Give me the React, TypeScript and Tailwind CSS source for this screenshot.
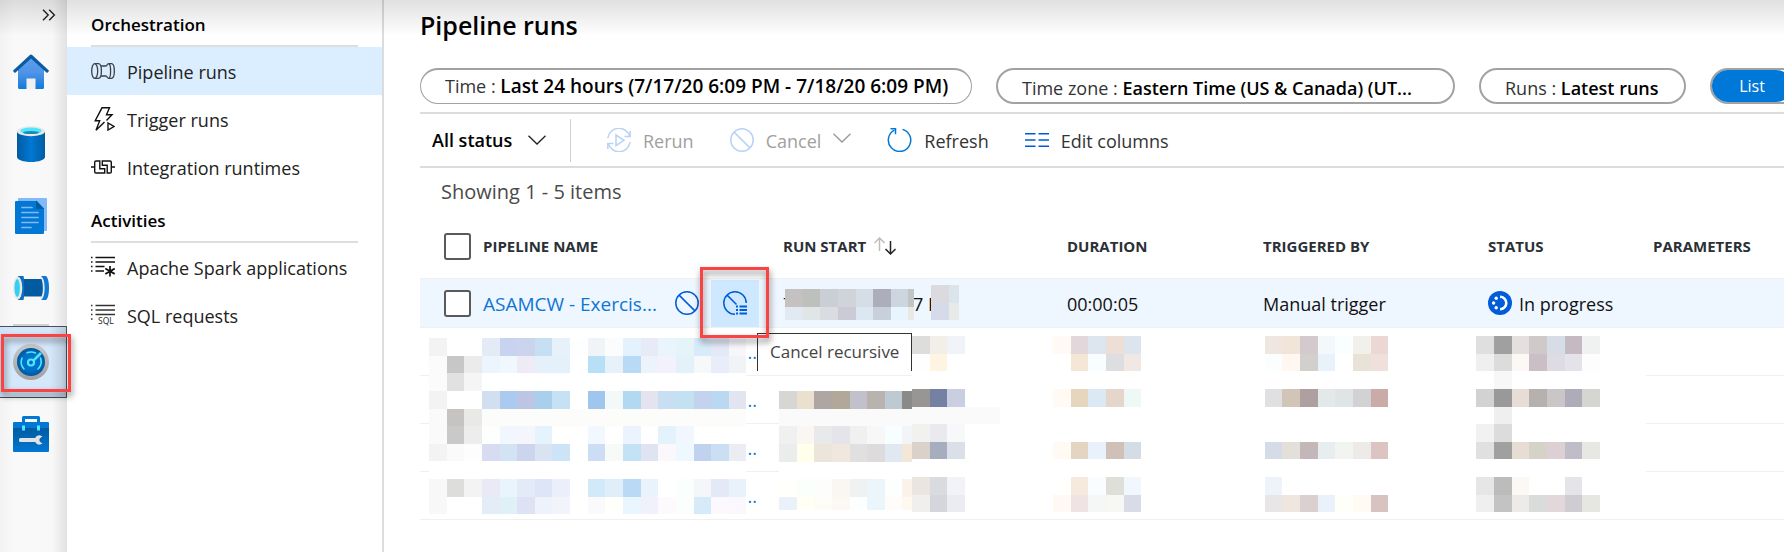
import React from 'react';

type IconProps = { className?: string };

const CELL = 17.64;

/* ---------- Rail icons ---------- */

function ExpandIcon() {
  return (
    <svg width="14" height="12" viewBox="0 0 14 12" fill="none" stroke="#222" strokeWidth="1.4" aria-hidden="true">
      <path d="M1 .7 6.2 6 1 11.3M7.2 .7 12.4 6 7.2 11.3" />
    </svg>
  );
}

function HomeIcon() {
  return (
    <svg width="36" height="36" viewBox="0 0 36 36" aria-hidden="true">
      <defs>
        <linearGradient id="home-body" x1="0" y1="0" x2="0" y2="1">
          <stop offset="0" stopColor="#5ea0ef" />
          <stop offset="0.5" stopColor="#5093e8" />
          <stop offset="1" stopColor="#0f7bda" />
        </linearGradient>
      </defs>
      <path d="M18 2 5 15v18.500a1.500 1.500 0 0 0 1.500 1.500h23a1.500 1.500 0 0 0 1.500-1.500V15z" fill="url(#home-body)" />
      <path d="M13.500 24.500h9V35h-9z" fill="#f0f0f0" />
      <path d="M16.900.9a1.600 1.600 0 0 1 2.200 0L35.600 16.300a1 1 0 0 1 0 1.300l-.9.900a1 1 0 0 1-1.300 0L18 4.500 2.600 18.500a1 1 0 0 1-1.300 0l-.9-.9a1 1 0 0 1 0-1.300z" fill="#0a5ba0" />
    </svg>
  );
}

function DatabaseIcon() {
  return (
    <svg width="36" height="36" viewBox="0 0 36 36" aria-hidden="true">
      <defs>
        <linearGradient id="db-body" x1="0" y1="0" x2="1" y2="0">
          <stop offset="0" stopColor="#005ba1" />
          <stop offset="0.2" stopColor="#0067b5" />
          <stop offset="0.5" stopColor="#0078d4" />
          <stop offset="0.8" stopColor="#0067b5" />
          <stop offset="1" stopColor="#005ba1" />
        </linearGradient>
      </defs>
      <path d="M4 5v26c0 2.800 6.300 5 14 5s14-2.200 14-5V5z" fill="url(#db-body)" />
      <ellipse cx="18" cy="5.200" rx="14" ry="5" fill="#e8e8e8" />
      <ellipse cx="18" cy="4.800" rx="10.800" ry="3.300" fill="#50e6ff" />
      <ellipse cx="18" cy="6.600" rx="8" ry="1.500" fill="#198ab3" />
    </svg>
  );
}

function DocsIcon() {
  return (
    <svg width="36" height="36" viewBox="0 0 36 36" aria-hidden="true">
      <rect x="5" width="29" height="33" rx="1" fill="#83b9f9" />
      <path d="M3 3h21l7 7.500V35a1 1 0 0 1-1 1H3a1 1 0 0 1-1-1V4a1 1 0 0 1 1-1z" fill="#0078d4" />
      <path d="M23 2.500 31 11h-6.500A1.500 1.500 0 0 1 23 9.500z" fill="#005ba1" />
      <path d="M9 9.500h10M9 14.500h16M9 19.500h16M9 24.500h16M9 29.500h9" stroke="#83b9f9" strokeWidth="1.700" strokeLinecap="round" />
    </svg>
  );
}

function PipeIcon() {
  return (
    <svg width="36" height="36" viewBox="0 0 36 36" aria-hidden="true">
      <path d="M8 9h22v17.500H8z" fill="#005ba1" />
      <path d="M5 6h5.500l.5 3v18l-.5 3H5z" fill="#0f6cbf" />
      <ellipse cx="4.700" cy="18" rx="4.600" ry="11.500" fill="#e6e6e6" />
      <ellipse cx="4.200" cy="18" rx="2.700" ry="9" fill="#32d0ee" />
      <path d="M28 6h5c4 2.500 4 21.500 0 24h-5c4-4 4-20 0-24z" fill="#0f78d4" />
      <path d="M28 7c3.700 4 3.700 18 0 22" fill="none" stroke="#e6e6e6" strokeWidth="1.800" />
    </svg>
  );
}

function MonitorIcon() {
  return (
    <svg width="36" height="36" viewBox="0 0 36 36" aria-hidden="true">
      <defs>
        <linearGradient id="mon-ring" x1="0" y1="0" x2="0" y2="1">
          <stop offset="0" stopColor="#c9c9c9" />
          <stop offset="1" stopColor="#a0a0a0" />
        </linearGradient>
        <radialGradient id="mon-face">
          <stop offset="0" stopColor="#0078d4" />
          <stop offset="0.6" stopColor="#0070c6" />
          <stop offset="1" stopColor="#0058a0" />
        </radialGradient>
      </defs>
      <circle cx="18" cy="18" r="18" fill="url(#mon-ring)" />
      <circle cx="18" cy="18" r="14" fill="url(#mon-face)" />
      <g fill="none" stroke="#50e6ff" strokeWidth="1.600" strokeLinecap="round">
        <path d="M11 25a10.500 10.500 0 0 1-2-11" />
        <path d="M14 8.800a10.500 10.500 0 0 1 8.500.2" />
        <path d="M27.500 14a10.500 10.500 0 0 1-2.500 11" />
      </g>
      <path d="M19.800 16 27 8.500l1.500 1.500L21 17.200z" fill="#50e6ff" stroke="#50e6ff" />
      <circle cx="18" cy="18.500" r="3" fill="#0067b8" stroke="#50e6ff" strokeWidth="2.200" />
    </svg>
  );
}

function ToolboxIcon() {
  return (
    <svg width="36" height="36" viewBox="0 0 36 36" aria-hidden="true">
      <defs>
        <linearGradient id="box-body" x1="0" y1="0" x2="0" y2="1">
          <stop offset="0" stopColor="#005ba1" />
          <stop offset="1" stopColor="#0078d4" />
        </linearGradient>
      </defs>
      <path d="M10.500 7V1.500h15V7" fill="none" stroke="#0078d4" strokeWidth="3" strokeLinejoin="round" />
      <path d="M0 12h36v23a1 1 0 0 1-1 1H1a1 1 0 0 1-1-1z" fill="url(#box-body)" />
      <path d="M1 6h34a1 1 0 0 1 1 1v5H0V7a1 1 0 0 1 1-1z" fill="#0078d4" />
      <path d="M9 9.500h3v5H9zM24 9.500h3v5h-3z" fill="#50e6ff" />
      <path d="M7.500 22h14.800c.8-1.800 2.600-2.800 4.700-2.600l2.500.8-3 2.500v2.600l3 2.500-2.500.8c-2.100.2-3.900-.8-4.700-2.600H7.500a1.500 1.500 0 0 1-1.500-1.500v-1A1.500 1.500 0 0 1 7.500 22z" fill="#e3e3e3" />
    </svg>
  );
}

/* ---------- Navigation icons ---------- */

function PipelineRunsIcon() {
  return (
    <svg width="24" height="24" viewBox="0 0 24 24" fill="none" stroke="#3b4248" strokeWidth="1.300" aria-hidden="true">
      <ellipse cx="3.700" cy="12" rx="3" ry="7.300" />
      <path d="M3.700 4.700h4c3.600.6 3.600 14 0 14.600h-4" />
      <path d="M10 7h5.500M10 17h5.500" />
      <path d="M15.500 7c.6-1.700 1.300-2.300 2.200-2.300h3c3.500.6 3.500 14 0 14.600h-3c-.9 0-1.600-.6-2.200-2.300" />
      <path d="M17.800 4.700c2.400 1 2.400 13.600 0 14.600" />
    </svg>
  );
}

function TriggerIcon() {
  return (
    <svg width="24" height="24" viewBox="0 0 24 24" fill="none" stroke="#111" strokeWidth="1.400" aria-hidden="true">
      <path d="M15.500 13.500 21 7.800h-5.500L18.500.8H11L4.200 13.700h4.500L5 23.300l8.500-8.200" />
      <path d="M17 16v7l6-3.500z" />
    </svg>
  );
}

function IntegrationIcon() {
  return (
    <svg width="24" height="24" viewBox="0 0 24 24" fill="none" stroke="#111" strokeWidth="1.400" aria-hidden="true">
      <path d="M0 12h3.500M20.500 12H24" />
      <path d="M8.800 6H5A1.300 1.300 0 0 0 3.700 7.300v9.400A1.300 1.300 0 0 0 5 18h8.700v-4.200H8.800z" />
      <path d="M11.300 10.200V6H19A1.300 1.300 0 0 1 20.300 7.300v9.400A1.300 1.300 0 0 1 19 18h-2.800v-7.800z" />
    </svg>
  );
}

function SparkIcon() {
  return (
    <svg width="24" height="24" viewBox="0 0 24 24" fill="none" stroke="#111" strokeWidth="1.300" aria-hidden="true">
      <path d="M4.500 2.500H24M4.500 7H24M4.500 11.500h9M4.500 16h8.500" />
      <path d="M0 2.500h1.500M0 7h1.500M0 11.500h1.500M0 16h1.500" />
      <path d="M19 11v10.500M14.300 13.600l9.400 5.300M23.700 13.600l-9.400 5.300" strokeWidth="1.700" />
    </svg>
  );
}

function SqlIcon() {
  return (
    <svg width="24" height="24" viewBox="0 0 24 24" fill="none" stroke="#333" strokeWidth="1.300" aria-hidden="true">
      <path d="M4.500 2.500H24M4.500 7H24M4.500 11.500H24" />
      <path d="M0 2.500h1.500M0 7h1.500M0 11.500h1.500M0 16h1.500" />
      <text x="7" y="21" fontSize="8.500" fill="#222" stroke="none" fontFamily="'Open Sans', sans-serif">SQL</text>
    </svg>
  );
}

/* ---------- Toolbar and table icons ---------- */

function ChevronIcon({ className }: IconProps) {
  return (
    <svg className={className} width="18" height="10" viewBox="0 0 18 10" fill="none" stroke="currentColor" strokeWidth="1.300" aria-hidden="true">
      <path d="M.5.7 9 9 17.500.7" />
    </svg>
  );
}

function RerunIcon() {
  return (
    <svg width="24" height="24" viewBox="0 0 24 24" fill="none" stroke="#b9d2f5" strokeWidth="1.500" aria-hidden="true">
      <path d="M.9 10A11.200 11.200 0 0 1 22.800 8.500M23.100 14A11.200 11.200 0 0 1 1.200 15.500" />
      <path d="M23.200 3v5.600h-5.700M.8 21v-5.600h5.700" />
      <path d="M9 7v10.500l8-5.200z" />
    </svg>
  );
}

function CancelIcon({ className }: IconProps) {
  return (
    <svg className={className} width="24" height="24" viewBox="0 0 24 24" fill="none" stroke="currentColor" strokeWidth="1.500" aria-hidden="true">
      <circle cx="12" cy="12" r="11.200" />
      <path d="m4.100 4.100 15.800 15.800" />
    </svg>
  );
}

function CancelRecursiveIcon() {
  return (
    <svg width="24" height="24" viewBox="0 0 24 24" fill="none" stroke="#015cda" strokeWidth="1.500" aria-hidden="true">
      <path d="M23.200 12A11.200 11.200 0 1 0 12 23.200M4.100 4.100l9.400 9.400" />
      <path d="M16.500 15.500H24M16.500 19H24M16.500 22.500H24" strokeWidth="1.800" />
      <path d="M13 15.500h2M13 19h2M13 22.500h2" strokeWidth="1.800" />
    </svg>
  );
}

function RefreshIcon() {
  return (
    <svg width="25" height="24" viewBox="0 0 25 24" fill="none" stroke="#0078d4" strokeWidth="1.500" aria-hidden="true">
      <path d="M15.500 1.400A11.200 11.200 0 1 1 7.500 2.200" />
      <path d="M3.500.8h5v5.400" />
    </svg>
  );
}

function ColumnsIcon() {
  return (
    <svg width="24" height="24" viewBox="0 0 24 24" stroke="#015cda" strokeWidth="1.600" aria-hidden="true">
      <path d="M0 5.700h10.500M13.500 5.700H24M0 12h10.500M13.500 12H24M0 18.300h10.500M13.500 18.300H24" />
    </svg>
  );
}

function SortIcon() {
  return (
    <svg width="22" height="18" viewBox="0 0 22 18" fill="none" strokeWidth="1.500" aria-hidden="true">
      <path d="M5.500 14V1M.5 6l5-5 5 5" stroke="#bdbdbd" />
      <path d="M16.500 4v13M11.500 12l5 5 5-5" stroke="#222" />
    </svg>
  );
}

function InProgressIcon() {
  return (
    <svg width="24" height="24" viewBox="0 0 24 24" aria-hidden="true">
      <circle cx="12" cy="12" r="12" fill="#015cda" />
      <path d="M12 5.700a6.300 6.300 0 0 1 0 12.600" fill="none" stroke="#fff" strokeWidth="2.600" />
      <g fill="#fff">
        <circle cx="8.200" cy="7.300" r="1.700" />
        <circle cx="5.600" cy="12" r="1.700" />
        <circle cx="8.200" cy="16.700" r="1.700" />
      </g>
    </svg>
  );
}

/* ---------- Redaction mosaic ---------- */

type MosaicProps = { rows: string[]; width: number; height: number; className: string };

function Mosaic({ rows, width, height, className }: MosaicProps) {
  const at = (n: number) => Math.round(n * CELL);
  return (
    <svg className={className} width={width} height={height} viewBox={`0 0 ${width} ${height}`} shapeRendering="crispEdges" aria-hidden="true">
      {rows.map((row, r) =>
        row.split(' ').map((color, c) =>
          color === '-' || color === '' ? null : (
            <rect key={`${r}-${c}`} x={at(c)} y={at(r)} width={at(c + 1) - at(c)} height={at(r + 1) - at(r)} fill={`#${color}`} />
          ),
        ),
      )}
    </svg>
  );
}

const NAME_MOSAIC = [
  'f3f3f3 fff fff e4ebf6 c8d3ef cbd4ed c6dff3 e7f1f9 fcfffd f0f4f8 fafdfb e3f2fc e7ebf7 eaf4fc e4f4f9 d8ebfa e3e9f7 f7f6fa',
  'fbfbfb c7c7c7 ebebeb ecf4fd f0f7ff eeebf7 e4f1fb e4f1fb fff b7dff6 e6f1fa b9daf4 ecf3fb f3f1fc e3f1fa f7f8f9 e7eef9 f0f4f7',
  'fbfbfb e1e1e1 f5f5f5',
  'f3f3f3 fff fff d2dff0 abcaf0 bdc5e5 aacfec c6e1f4 fff 9fc6ec f3f8f8 b3d8f2 e5e3f0 c8def3 c4e1f2 c4d3ed b9d8f1 e2e5ef',
  'fafafa c5c4c3 e9e9e7 fcfcfa fcfcfa fcfcfa fcfcfa fcfcfa fcfcfa fcfcfa fcfcfa fcfcfa fcfcfa fcfcfa fcfcfa fcfcfa fcfcfa fcfcfa',
  'fafafa c9c9c9 ededed fdfffe f2f7ff f5f6fb e5f3fd fffffd fff f2f8ff fff ebf4fe fff e4f2fc f2f7ff fff fff fff',
  'f3f3f3 fafafa fdfdfd d7dcf0 d2e3f4 cdd5ee d9e3f2 cce3f8 fff ccdef5 f7faf6 c4e2f5 e0e3f2 fcf7fb eef9ff c1d2ee cbdff4 ececf3',
  '',
  'f8f8f8 dddddb f3f3f3 eae9f6 e9f5fc e4ebf8 dfe5f8 eaeffb fff d1e9f9 dfeef8 bad9f4 eaf2fb fff fafffe f4f6fa e3e9f6 e9f1fa',
  'f8f8f8 fff fff e4ecf7 dff0f7 dde3f5 eef2fb f1f4fa fff fafafd fffffc e9f6fd f1f1fb fdfafd fafffe d6eafa fbf9fd faf8fc',
];

const START_MOSAIC = [
  'd6d6d3 e9e1cd aea6a3 b2a89a c1c0cb b8b3af bdcad1 8a8a87',
  'fafafa fafafa fafafa fafafa fafafa fafafa fafafa fafafa',
  'f0f0f0 faf7f2 e8e9eb e3e5ea f0f0f1 f7f7f7 f8fdff f2f4f7',
  'eaedec ffffec ece5dc f0e7de e0e0e1 dddbdc e0e9f2 f3e7d7',
  '',
  'fffffc fbfffb fdfdfc faf6f2 f0f1f1 ecf5fa fdffff fbf2ea',
  'eaf1f9 fffff4 fdfcf7 fcf8f4 fbffff eaf5fc fffdfa fff8ee',
];

const GAP_5 = '- - - - -';
const GAP_7 = '- - - - - - -';

const DETAIL_MOSAIC = [
  ['dddddb f2efe8 f0f4f8', 'fffaf3 e2d8dc dde5ef eddfd6 dce4ee', 'efe6df f0e5d8 d4cacd f3f8fb f9feff f1f0ea ebd8d5', 'dfdfdf a0a0a0 e5e0e0 cfcac9 d6dde7 c5b9c2 eff2f1'],
  ['fefefe fff3e2 fff', 'fffffd f4e7d6 f8feff dddee1 f1e8e3', 'fafeff fff7f0 d1d0cd e9f1fa fff e9e2d7 efdfdd', 'efefef dcdcdc fcf8f3 cabfc4 dedce2 e4e3e9 fdfdfd'],
  ['- - -', GAP_5, GAP_7, '- f7f7f7'],
  ['989694 7581a3 c9cee1', 'fffaf3 e6d6be dbe9f5 e6d5ca eef8f7', 'e0e0e3 d1c5b8 ae9fa1 e3e8e9 dfe5e5 d2d1d3 caaba8', 'd2d2d2 999999 e8ddd6 b6b0af cac6c8 afacba d5d6d1'],
  ['fafafa fafafa fafafa', GAP_5, GAP_7, '- efefef'],
  ['f1f1ef e9e9ee f7f8f9', GAP_5, GAP_7, 'f1f1f1 dcdcdc'],
  ['d9d1ca a6adbe dbdfe8', 'fffaf3 e4d5c2 e9f2fa cfc0b8 d4dce6', 'd5dce7 e3dfd9 c3b7b9 e8eef0 f1f4f1 edeae7 dcc4c2', 'e0e0e0 a0a0a0 e8ddd3 d5d2c8 dcd0d5 c0bdc8 e7e8e3'],
  ['- - -', GAP_5, GAP_7, ''],
  ['eae6df d9dbe1 f1f3f7', 'fffffd f5eadd f9fdff dfdfda f1f8fd', 'edf3f8 - - - - - -', 'e6e6e6 bcbcbc fcf8f3 - - e5e4e9'],
  ['f0efee d4d6dc ebecf1', 'fff9f4 efe4e3 f5f7f6 f7f7f4 d9dce6', 'e8e6e7 efe6df dad0cf e9f1fa fffff9 fffaf4 d7c3c0', 'efefef c3c3c3 edeaea d9dcdb e2d7db cfccd2 e6e7e0'],
].map(([start, duration, trigger, status], r) => {
  const afterStart = r === 4 ? 'fafafa fafafa - - -' : GAP_5;
  return `${start} ${afterStart} ${duration} ${GAP_7} ${trigger} ${GAP_5} ${status}`;
});

const RUN_MOSAIC = [
  'c5c1c0 bdc0bc cacfd6 d0d4d8 d6dde7 acaebb cdd5de c1c6c5',
  'e2e9f2 dfe6e5 dadce1 cbcad7 dbe7f3 c8d0db e8f5ff eae8e5',
];
const RUN_END_MOSAIC = ['dadadf dbe3eb', 'd5dbe8 e7eae9'];

/* ---------- Page ---------- */

const RAIL_TOP = [
  { label: 'Home', icon: <HomeIcon /> },
  { label: 'Data', icon: <DatabaseIcon /> },
  { label: 'Develop', icon: <DocsIcon /> },
  { label: 'Integrate', icon: <PipeIcon /> },
];

const NAV = [
  {
    title: 'Orchestration',
    pad: 'pt-[13px]',
    items: [
      { label: 'Pipeline runs', icon: <PipelineRunsIcon />, active: true },
      { label: 'Trigger runs', icon: <TriggerIcon />, active: false },
      { label: 'Integration runtimes', icon: <IntegrationIcon />, active: false },
    ],
  },
  {
    title: 'Activities',
    pad: 'pt-[18px]',
    items: [
      { label: 'Apache Spark applications', icon: <SparkIcon />, active: false },
      { label: 'SQL requests', icon: <SqlIcon />, active: false },
    ],
  },
];

function Highlight({ className }: IconProps) {
  return (
    <span className={`pointer-events-none absolute z-20 border-3 border-[#fc4343] drop-shadow-[1px_4px_3px_rgba(0,0,0,0.5)] ${className}`} />
  );
}

function Rail() {
  return (
    <nav aria-label="Hubs" className="flex w-[67px] shrink-0 flex-col bg-[linear-gradient(to_right,#f2f2f2,#f9f9f9_14px,#f8f8f8_52px,#e2e2e2)]">
      <button type="button" aria-label="Expand" className="flex h-9 items-center justify-end pr-[11px] pb-1.5">
        <ExpandIcon />
      </button>
      {RAIL_TOP.map((item) => (
        <a key={item.label} href="#" aria-label={item.label} className="flex h-18 items-center pl-[13px]">
          {item.icon}
        </a>
      ))}
      <div className="ml-[13px] h-0.5 w-9 bg-[#d2d2d2]" />
      <a
        href="#"
        aria-label="Monitor"
        className="relative flex h-18 items-center border-y border-r border-[#4a4f55] bg-[linear-gradient(to_right,#d0e2f5,#d4e7fb_14px,#d4e7fb_50px,#b9c9da)] pl-[13px]"
      >
        <MonitorIcon />
        <Highlight className="top-[7px] -right-[5px] h-[58px] w-[70px]" />
      </a>
      <a href="#" aria-label="Manage" className="flex h-18 items-center pl-[13px]">
        <ToolboxIcon />
      </a>
    </nav>
  );
}

function Sidebar() {
  return (
    <aside className="w-[317px] shrink-0 border-r-2 border-[#dcdcdc] bg-white">
      {NAV.map((group) => (
        <section key={group.title}>
          <h2 className={`mr-6 ml-6 border-b-2 border-[#dedede] pb-2 text-[17px] leading-6 font-semibold text-black ${group.pad}`}>
            {group.title}
          </h2>
          <ul>
            {group.items.map((item) => (
              <li key={item.label}>
                <a
                  href="#"
                  aria-current={item.active ? 'page' : undefined}
                  className={`flex h-12 items-center gap-3 pl-6 text-[18px] whitespace-nowrap text-[#222] ${item.active ? 'bg-[#dbeeff]' : ''}`}
                >
                  {item.icon}
                  <span className="pt-0.5">{item.label}</span>
                </a>
              </li>
            ))}
          </ul>
        </section>
      ))}
    </aside>
  );
}

function Filters() {
  const pill = 'flex h-9 shrink-0 items-center rounded-full border-2 border-[#a2a2a2] bg-white text-[18px] whitespace-nowrap text-[#333]';
  return (
    <div className="flex gap-6">
      <button type="button" className={`${pill} w-[552px] border-x border-b px-6`}>
        Time :&nbsp;<span className="text-[19px] font-semibold text-black">Last 24 hours (7/17/20 6:09 PM - 7/18/20 6:09 PM)</span>
      </button>
      <button type="button" className={`${pill} w-[459px] px-6 pt-1`}>
        Time zone :&nbsp;<span className="font-semibold text-black">Eastern Time (US &amp; Canada) (UT...</span>
      </button>
      <button type="button" className={`${pill} w-[207px] px-6 pt-1`}>
        Runs :&nbsp;<span className="font-semibold text-black">Latest runs</span>
      </button>
      <div className={`${pill} w-48`}>
        <button type="button" className="h-full w-20 rounded-full bg-[#0078d7] text-[16px] text-white">
          List
        </button>
      </div>
    </div>
  );
}

function Toolbar() {
  const action = 'flex items-center gap-3 text-[18px] whitespace-nowrap';
  return (
    <div className="mt-2 flex h-14 items-center border-y-2 border-[#dcdcdc]">
      <div className="relative flex items-center">
        <select
          aria-label="Status filter"
          className="w-[150px] appearance-none bg-transparent pl-3 text-[18px] font-semibold text-black"
          defaultValue="All status"
        >
          <option>All status</option>
        </select>
        <ChevronIcon className="pointer-events-none absolute right-6 text-[#222]" />
      </div>
      <div className="h-[43px] w-px bg-[#d0d0d0]" />
      <div className="flex items-center gap-9 pl-9">
        <button type="button" disabled className={`${action} text-[#a0a0a0]`}>
          <RerunIcon />
          <span className="pt-0.5">Rerun</span>
        </button>
        <button type="button" disabled className={`${action} text-[#a0a0a0]`}>
          <CancelIcon className="text-[#b9d2f5]" />
          <span className="pt-0.5">Cancel</span>
          <ChevronIcon className="-mt-1 text-[#999]" />
        </button>
        <button type="button" className={`${action} text-[#333]`}>
          <RefreshIcon />
          <span className="pt-0.5">Refresh</span>
        </button>
        <button type="button" className={`${action} text-[#333]`}>
          <ColumnsIcon />
          <span className="pt-0.5">Edit columns</span>
        </button>
      </div>
    </div>
  );
}

function Checkbox({ label }: { label: string }) {
  return (
    <input
      type="checkbox"
      aria-label={label}
      className="ml-6 block size-[27px] appearance-none rounded-[3px] border-2 border-[#5a5a5a] bg-white"
    />
  );
}

function RunsTable() {
  const rule = 'border-b border-[#f0f0f0]';
  return (
    <div className="relative">
      <table className="w-full table-fixed border-separate border-spacing-0 text-left text-[18px] whitespace-nowrap text-[#111]">
        <colgroup>
          <col className="w-[63px]" />
          <col className="w-[300px]" />
          <col className="w-[284px]" />
          <col className="w-[196px]" />
          <col className="w-[225px]" />
          <col className="w-[165px]" />
          <col />
        </colgroup>
        <thead className="text-[15px] text-[#2b3036]">
          <tr className="h-[65px]">
            <th className={rule}><Checkbox label="Select all runs" /></th>
            <th className={rule}>PIPELINE NAME</th>
            <th className={rule}>
              <span className="flex items-center gap-2">RUN START <SortIcon /></span>
            </th>
            <th className={rule}>DURATION</th>
            <th className={rule}>TRIGGERED BY</th>
            <th className={rule}>STATUS</th>
            <th className={rule}>PARAMETERS</th>
          </tr>
        </thead>
        <tbody>
          <tr className="h-[49px] bg-[#eef6ff]">
            <td className={rule}><Checkbox label="Select run" /></td>
            <td className={rule}>
              <div className="flex items-center">
                <a href="#" className="w-48 pt-0.5 text-[19px] text-[#0f75d4]">ASAMCW - Exercis...</a>
                <button type="button" aria-label="Cancel">
                  <CancelIcon className="text-[#015cda]" />
                </button>
                <div className="relative ml-3">
                  <button type="button" aria-label="Cancel recursive" className="flex h-[47px] w-12 items-center justify-center bg-[#cde8ff]">
                    <CancelRecursiveIcon />
                  </button>
                  <Highlight className="-top-[13px] -left-[11px] h-[71px] w-[69px]" />
                  <div role="tooltip" className="absolute top-[53px] left-[46px] z-10 h-[38px] border border-b-0 border-[#333] bg-white px-3 text-[17px] leading-9 text-[#444]">
                    Cancel recursive
                  </div>
                </div>
              </div>
            </td>
            <td className={rule}>
              <div className="flex pt-0.5"><span className="w-[130px]">7</span>7 P</div>
            </td>
            <td className={rule}><div className="pt-0.5">00:00:05</div></td>
            <td className={rule}><div className="pt-0.5">Manual trigger</div></td>
            <td className={rule}>
              <div className="flex items-center gap-[7px]">
                <InProgressIcon />
                <span className="pt-0.5">In progress</span>
              </div>
            </td>
            <td className={rule} />
          </tr>
          {[2, 3, 4, 5].map((n) => (
            <tr key={n} className="h-12">
              <td className={rule} />
              <td className={rule}>
                <a href="#" className="block w-[274px] pt-0.5 text-right text-[#0f75d4]">..</a>
              </td>
              <td className={rule} />
              <td className={rule} />
              <td className={rule} />
              <td className={rule} />
              <td className={rule} />
            </tr>
          ))}
        </tbody>
      </table>
      <Mosaic className="absolute top-[124px] left-[9px] bg-white" rows={NAME_MOSAIC} width={317} height={176} />
      <Mosaic className="absolute top-[177px] left-[359px] bg-white" rows={START_MOSAIC} width={133} height={119} />
      <Mosaic className="absolute top-[122px] left-[492px] bg-white" rows={DETAIL_MOSAIC} width={734} height={176} />
      <Mosaic className="absolute top-[75px] left-[365px]" rows={RUN_MOSAIC} width={129} height={31} />
      <Mosaic className="absolute top-[71px] left-[511px]" rows={RUN_END_MOSAIC} width={28} height={35} />
    </div>
  );
}

export default function App() {
  return (
    <div className="relative flex min-h-screen overflow-hidden bg-white font-['Open_Sans','Noto_Sans',sans-serif]">
      <Rail />
      <Sidebar />
      <main className="min-w-0 flex-1 overflow-hidden pl-9">
        <h1 className="pt-[7px] pb-[25px] text-[25px] leading-9 font-semibold text-black">Pipeline runs</h1>
        <Filters />
        <Toolbar />
        <p className="pt-[11px] pb-[9px] pl-[21px] text-[20px] leading-[26px] text-[#4a4a4a]">Showing 1 - 5 items</p>
        <RunsTable />
      </main>
      <div className="pointer-events-none absolute inset-x-0 top-0 h-9 bg-linear-to-b from-black/12 to-transparent" />
    </div>
  );
}
